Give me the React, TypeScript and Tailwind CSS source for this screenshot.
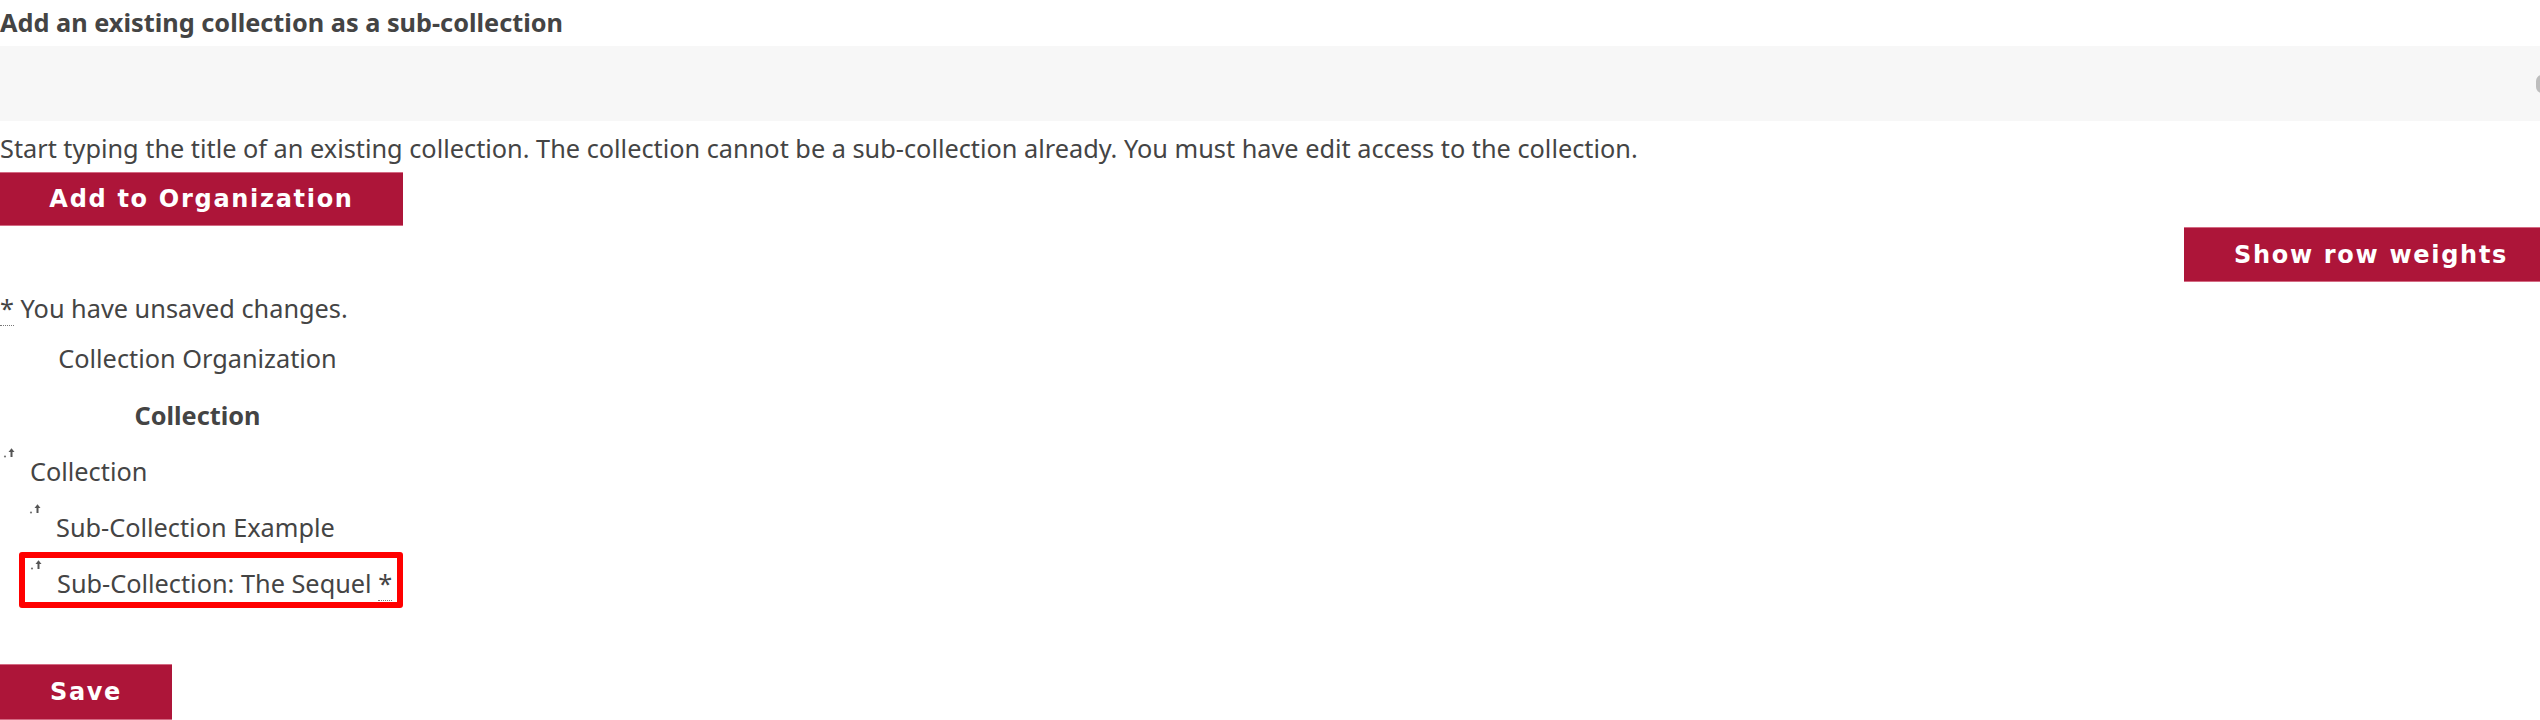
export default function App() {
  return (
    <div className="relative min-h-[720px] bg-white font-['Noto_Sans',sans-serif] text-[25.3px] text-[#444]">
      {/* autocomplete field */}
      <label className="block h-[46px] font-bold leading-[44px]">
        Add an existing collection as a sub-collection
      </label>
      <div className="relative h-[75px] bg-[#f7f7f7]">
        <span className="absolute right-[-8px] top-[29px] h-[18px] w-[12px] rounded-full bg-[#bdbdbd]" />
      </div>
      <p className="pt-[10px] leading-[34px]">
        Start typing the title of an existing collection. The collection cannot be a sub-collection already. You must
        have edit access to the collection.
      </p>
      <RedButton className="mt-[7px] h-[54px] w-[403px]">Add to Organization</RedButton>

      <div className="mt-[1px] flex justify-end">
        <RedButton className="h-[55px] w-[356px] pl-[18px]">Show row weights</RedButton>
      </div>

      <p className="mt-[9px] leading-[34px]">
        <Star /> You have unsaved changes.
      </p>

      {/* draggable table */}
      <div className="w-[395px]">
        <div className="mt-[16px] text-center leading-[34px]">Collection Organization</div>
        <div className="mt-[23px] text-center font-bold leading-[34px]">Collection</div>
        <div className="mt-[8px]">
          <Row indent={0} label="Collection" />
          <Row indent={26} label="Sub-Collection Example" />
          <div className="ml-[19px] flex h-[56px] w-[384px] rounded-[3px] border-[6px] border-[#ff0000] pl-[6px]">
            <Handle top={2} />
            <span className="mt-[8px] leading-[34px]">
              Sub-Collection: The Sequel <Star />
            </span>
          </div>
        </div>
      </div>

      <RedButton className="mt-[56px] h-[56px] w-[172px]">Save</RedButton>
    </div>
  )
}

function RedButton({ children, className }: { children: string; className: string }) {
  return (
    <button
      className={
        "block border-y border-t-[#d46a83] border-b-[#d46a83] bg-[#ad1539] text-center font-['DejaVu_Sans',sans-serif] text-[24px] font-bold tracking-[1.7px] text-white " +
        className
      }
    >
      {children}
    </button>
  )
}

function Star() {
  return <abbr className="border-b border-dotted border-[#777] no-underline">*</abbr>
}

function Handle({ top }: { top: number }) {
  return (
    <span className="block w-[26px] shrink-0">
      <svg width="14" height="10" viewBox="0 0 14 10" style={{ marginTop: top }} className="ml-[-1px]">
        <circle cx="2" cy="8.5" r="1.1" fill="#777" />
        <polygon points="5.5,4 8.5,0.3 11.5,4" fill="#555" />
        <rect x="7.5" y="3.5" width="2" height="5.5" fill="#555" />
      </svg>
    </span>
  )
}

function Row({ indent, label }: { indent: number; label: string }) {
  return (
    <div className="flex h-[56px]" style={{ paddingLeft: indent + 4 }}>
      <Handle top={8} />
      <span className="mt-[14px] leading-[34px]">{label}</span>
    </div>
  )
}
